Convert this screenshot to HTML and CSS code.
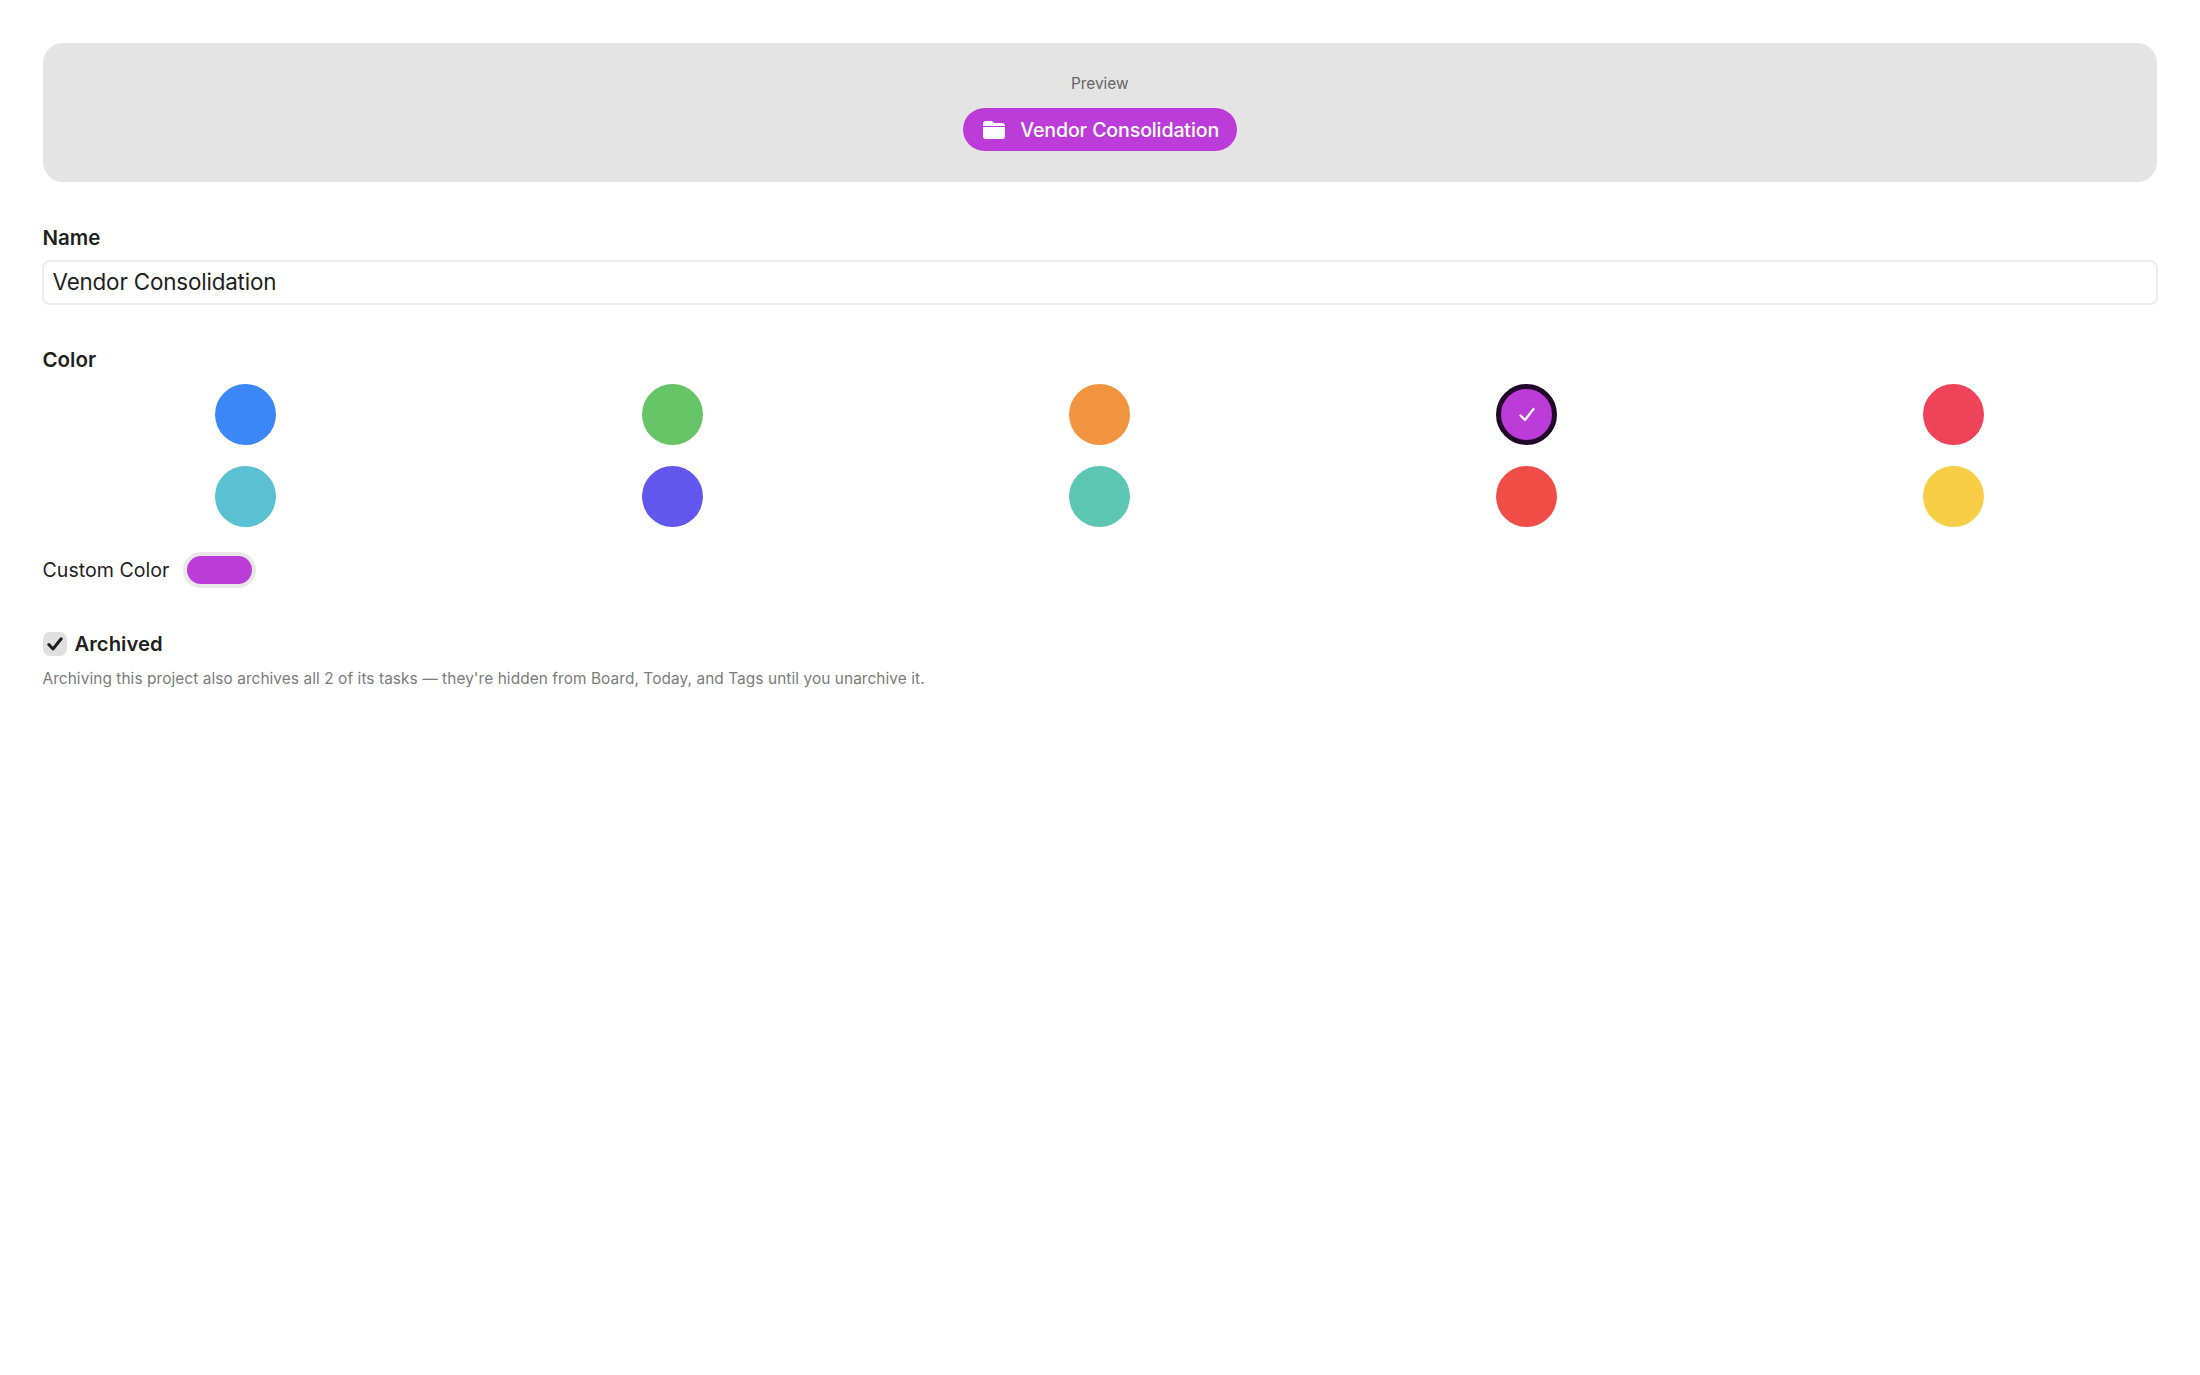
FILE: index.html
```html
<!DOCTYPE html>
<html lang="en">
<head>
<meta charset="utf-8">
<title>Edit Project</title>
<link rel="stylesheet" href="styles.css">
</head>
<body>
<main class="page">
  <section class="preview">
    <div class="preview-label">Preview</div>
    <div class="pill">
      <svg class="pill-icon" viewBox="0 0 22 18" aria-hidden="true"><path d="M3 0h5.2c.9 0 1.4.3 2 .9L11.4 2H19a3 3 0 0 1 3 3H0V3a3 3 0 0 1 3-3Z M0 6h22v9a3 3 0 0 1-3 3H3a3 3 0 0 1-3-3Z" fill="#fff"/></svg>
      <span class="pill-text">Vendor Consolidation</span>
    </div>
  </section>

  <section class="field name-field">
    <label class="label name-label">Name</label>
    <div class="input">Vendor Consolidation</div>
  </section>

  <section class="field color-field">
    <div class="label">Color</div>
    <div class="swatches">
      <div class="cell"><span class="swatch blue"></span></div>
      <div class="cell"><span class="swatch green"></span></div>
      <div class="cell"><span class="swatch orange"></span></div>
      <div class="cell"><span class="swatch purple selected"><svg viewBox="0 0 18 18" class="tick" aria-hidden="true"><path d="M2.5 9.5 7 14l8.5-11" fill="none" stroke="#fff" stroke-width="2.2" stroke-linecap="round" stroke-linejoin="round"/></svg></span></div>
      <div class="cell"><span class="swatch pink"></span></div>
      <div class="cell"><span class="swatch cyan"></span></div>
      <div class="cell"><span class="swatch indigo"></span></div>
      <div class="cell"><span class="swatch teal"></span></div>
      <div class="cell"><span class="swatch red"></span></div>
      <div class="cell"><span class="swatch yellow"></span></div>
    </div>
    <div class="custom">
      <span>Custom Color</span>
      <span class="well"><span class="well-fill"></span></span>
    </div>
  </section>

  <section class="archive">
    <div class="archive-row">
      <span class="checkbox"><svg viewBox="0 0 16 14" class="check" aria-hidden="true"><path d="M1.8 7.5 6 12 14.2 1.8" fill="none" stroke="#1f1f1f" stroke-width="3" stroke-linecap="round" stroke-linejoin="round"/></svg></span>
      <span class="archive-label">Archived</span>
    </div>
    <p class="note">Archiving this project also archives all 2 of its tasks — they're hidden from Board, Today, and Tags until you unarchive it.</p>
  </section>
</main>
</body>
</html>
```
FILE: styles.css
```css
* { box-sizing: border-box; }
html, body { margin: 0; background: #fff; }
body { font-family: Inter, "Liberation Sans", sans-serif; color: #1f1f1f; }
.page { padding: 43px 43px 0 42.5px; display: flex; flex-direction: column; }
.preview { height: 139px; background: #e4e4e4; border-radius: 20px; display: flex; flex-direction: column; align-items: center; padding-top: 31px; }
.preview-label { font-size: 15.4px; line-height: 20px; color: #666; }
.pill { margin-top: 14px; height: 43px; width: 274px; border-radius: 21.5px; background: #bb3cd8; color: #fff; display: flex; align-items: center; padding-left: 20.5px; font-size: 19.6px; font-weight: 500; letter-spacing: -0.14px; }
.pill-icon { width: 22px; height: 18px; margin-right: 15px; flex: none; }
.pill-text { padding-top: 1px; }
.field { display: flex; flex-direction: column; }
.name-field { margin-top: 42px; }
.label { font-size: 20.5px; line-height: 26px; font-weight: 600; }
.name-label { line-height: 27px; }
.input { margin: 9px -1px 0 -0.5px; height: 45px; border: 2px solid #ebebeb; border-radius: 8px; padding-left: 8.5px; font-size: 22.4px; line-height: 40px; letter-spacing: -0.17px; }
.color-field { margin-top: 42px; }
.swatches { margin-top: 11px; display: grid; grid-template-columns: repeat(5, 1fr); gap: 21px; }
.cell { display: flex; justify-content: center; }
.swatch { width: 61px; height: 61px; border-radius: 50%; display: flex; align-items: center; justify-content: center; }
.blue { background: #3b87f7; }
.green { background: #65c466; }
.orange { background: #f29340; }
.purple { background: #bb3cd8; }
.pink { background: #ee4358; }
.cyan { background: #59c1d2; }
.indigo { background: #6156ee; }
.teal { background: #5cc6b2; }
.red { background: #ef4d46; }
.yellow { background: #f7cd46; }
.selected { border: 5px solid #22082a; }
.tick { width: 18px; height: 18px; }
.custom { margin-top: 25px; display: flex; align-items: center; gap: 13.5px; font-size: 19.6px; }
.well { width: 73px; height: 36px; border-radius: 18px; background: #e8e8e8; padding: 4px; display: block; }
.well-fill { display: block; height: 100%; border-radius: 14px; background: #bb3cd8; }
.archive { margin-top: 43px; }
.archive-row { display: flex; align-items: center; gap: 8px; }
.checkbox { width: 24px; height: 24px; border-radius: 7px; background: #e0e0e0; display: flex; align-items: center; justify-content: center; }
.check { width: 16px; height: 14px; }
.archive-label { font-size: 20.3px; font-weight: 600; line-height: 26px; }
.note { margin: 12px 0 0; font-size: 15.4px; line-height: 20px; color: #7b7b7b; letter-spacing: 0.08px; }
```
